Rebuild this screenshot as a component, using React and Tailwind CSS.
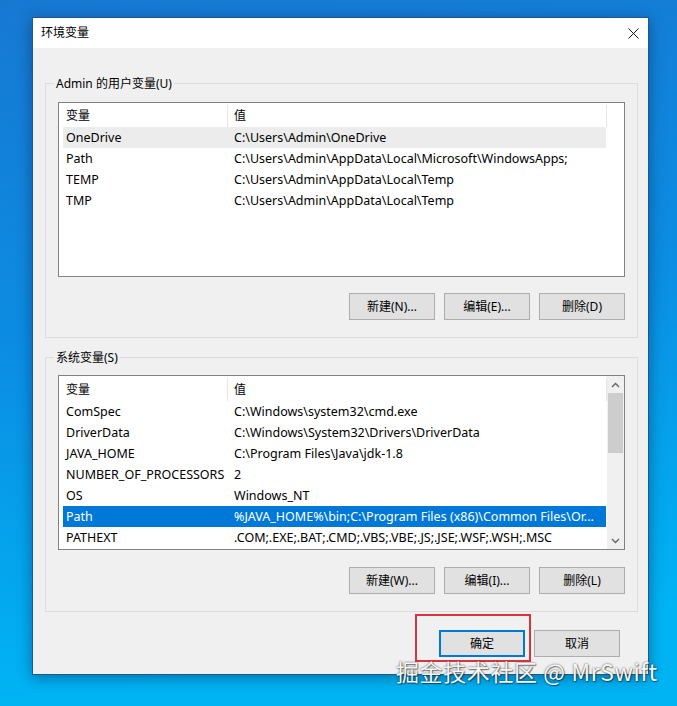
import React from 'react';

const userVars = [
    { name: 'OneDrive', value: 'C:\\Users\\Admin\\OneDrive', state: 'hover' },
    { name: 'Path', value: 'C:\\Users\\Admin\\AppData\\Local\\Microsoft\\WindowsApps;' },
    { name: 'TEMP', value: 'C:\\Users\\Admin\\AppData\\Local\\Temp' },
    { name: 'TMP', value: 'C:\\Users\\Admin\\AppData\\Local\\Temp' },
];

const systemVars = [
    { name: 'ComSpec', value: 'C:\\Windows\\system32\\cmd.exe' },
    { name: 'DriverData', value: 'C:\\Windows\\System32\\Drivers\\DriverData' },
    { name: 'JAVA_HOME', value: 'C:\\Program Files\\Java\\jdk-1.8' },
    { name: 'NUMBER_OF_PROCESSORS', value: '2' },
    { name: 'OS', value: 'Windows_NT' },
    { name: 'Path', value: '%JAVA_HOME%\\bin;C:\\Program Files (x86)\\Common Files\\Or...', state: 'selected' },
    { name: 'PATHEXT', value: '.COM;.EXE;.BAT;.CMD;.VBS;.VBE;.JS;.JSE;.WSF;.WSH;.MSC' },
];

const Chevron = ({ down }) => (
    <svg width="9" height="6" viewBox="0 0 9 6" className={down ? 'rotate-180' : ''}>
        <path d="M1 5 L4.5 1.5 L8 5" fill="none" stroke="#606060" strokeWidth="1.3" />
    </svg>
);

const WinButton = ({ children, primary }) => (
    <div
        className={
            primary
                ? 'w-[86px] h-[27px] flex items-center justify-center bg-[#e1e1e1] border-2 border-[#0078d7] text-black'
                : 'w-[86px] h-[27px] flex items-center justify-center bg-[#e1e1e1] border border-[#adadad] text-black'
        }
    >
        {children}
    </div>
);

const VarList = ({ rows, scroll, headerH }) => (
    <div className="h-[175px] border border-[#828282] bg-white flex">
        <div className="w-[548px] flex flex-col">
            {/* Column header */}
            <div className="flex pt-[2px]" style={{ height: headerH }}>
                <div className="w-[169px] pl-[7px] flex items-center border-r border-[#e5e5e5]">变量</div>
                <div className="w-[379px] pl-[6px] flex items-center border-r border-[#e5e5e5]">值</div>
            </div>
            {rows.map((r) => (
                <div
                    key={r.name}
                    className={
                        r.state === 'selected'
                            ? 'ml-[4px] w-[543px] h-[21px] pt-[2px] flex items-center text-[12.5px] bg-[#0078d7] text-white'
                            : r.state === 'hover'
                              ? 'ml-[4px] w-[543px] h-[21px] pt-[2px] flex items-center text-[12.5px] bg-[#ececec]'
                              : 'ml-[4px] w-[543px] h-[21px] pt-[2px] flex items-center text-[12.5px]'
                    }
                >
                    <div className="w-[165px] pl-[3px] whitespace-nowrap overflow-hidden">{r.name}</div>
                    <div className="flex-1 pl-[6px] whitespace-nowrap overflow-hidden">{r.value}</div>
                </div>
            ))}
        </div>
        {scroll && (
            <div className="w-[17px] bg-[#f0f0f0] flex flex-col">
                <div className="h-[17px] flex items-center justify-center">
                    <Chevron />
                </div>
                <div className="mx-[1px] h-[60px] bg-[#cdcdcd]" />
                <div className="flex-1" />
                <div className="h-[17px] flex items-center justify-center">
                    <Chevron down />
                </div>
            </div>
        )}
    </div>
);

const GroupBox = ({ label, children, className }) => (
    <div className={`w-[593px] ml-[12px] border border-[#dcdcdc] px-[12px] pb-[17px] ${className}`}>
        <div className="-mt-[9px] ml-[-4px] w-fit px-[2px] h-[17px] leading-[17px] bg-[#f0f0f0]">{label}</div>
        {children}
    </div>
);

export default function App() {
    return (
        <div className="w-[677px] h-[706px] overflow-hidden relative pt-[17px] pl-[32px] bg-[linear-gradient(172deg,#1778d2_0%,#0b8ee3_45%,#00b4f4_88%)] font-['Noto_Sans','Noto_Sans_CJK_SC',sans-serif] text-[12px] text-black">
            {/* Dialog window */}
            <div className="w-[617px] h-[658px] border border-[#1f5a80] bg-[#f0f0f0] shadow-[0_3px_14px_rgba(0,30,80,0.45)] flex flex-col">
                <div className="h-[30px] bg-white flex items-center justify-between pl-[8px] pr-[9px] shrink-0">
                    <span>环境变量</span>
                    <svg width="11" height="11" viewBox="0 0 11 11">
                        <path d="M0.5 0.5 L10.5 10.5 M10.5 0.5 L0.5 10.5" stroke="#111" strokeWidth="1" />
                    </svg>
                </div>

                <GroupBox label="Admin 的用户变量(U)" className="mt-[35px]">
                    <div className="mt-[10px]">
                        <VarList rows={userVars} headerH={24} />
                    </div>
                    <div className="mt-[16px] flex justify-end gap-[9px]">
                        <WinButton>新建(N)...</WinButton>
                        <WinButton>编辑(E)...</WinButton>
                        <WinButton>删除(D)</WinButton>
                    </div>
                </GroupBox>

                <GroupBox label="系统变量(S)" className="mt-[19px]">
                    <div className="mt-[9px]">
                        <VarList rows={systemVars} headerH={25} scroll />
                    </div>
                    <div className="mt-[17px] flex justify-end gap-[9px]">
                        <WinButton>新建(W)...</WinButton>
                        <WinButton>编辑(I)...</WinButton>
                        <WinButton>删除(L)</WinButton>
                    </div>
                </GroupBox>

                <div className="mt-[18px] pr-[28px] flex justify-end gap-[9px]">
                    <WinButton primary>确定</WinButton>
                    <WinButton>取消</WinButton>
                </div>
            </div>

            {/* Annotation and watermark */}
            <div className="absolute left-[415px] top-[614px] w-[116px] h-[48px] border-2 border-[#d8333f]" />
            <div className="absolute left-[396px] top-[657px] text-[23px] leading-[28px] tracking-[0.6px] text-[#f6f6f6] whitespace-nowrap font-['Noto_Sans_CJK_SC',sans-serif] [text-shadow:0_0_2px_rgba(0,0,0,0.7),1px_1px_1px_rgba(0,0,0,0.4)]">
                掘金技术社区 @ MrSwift
            </div>
        </div>
    );
}
